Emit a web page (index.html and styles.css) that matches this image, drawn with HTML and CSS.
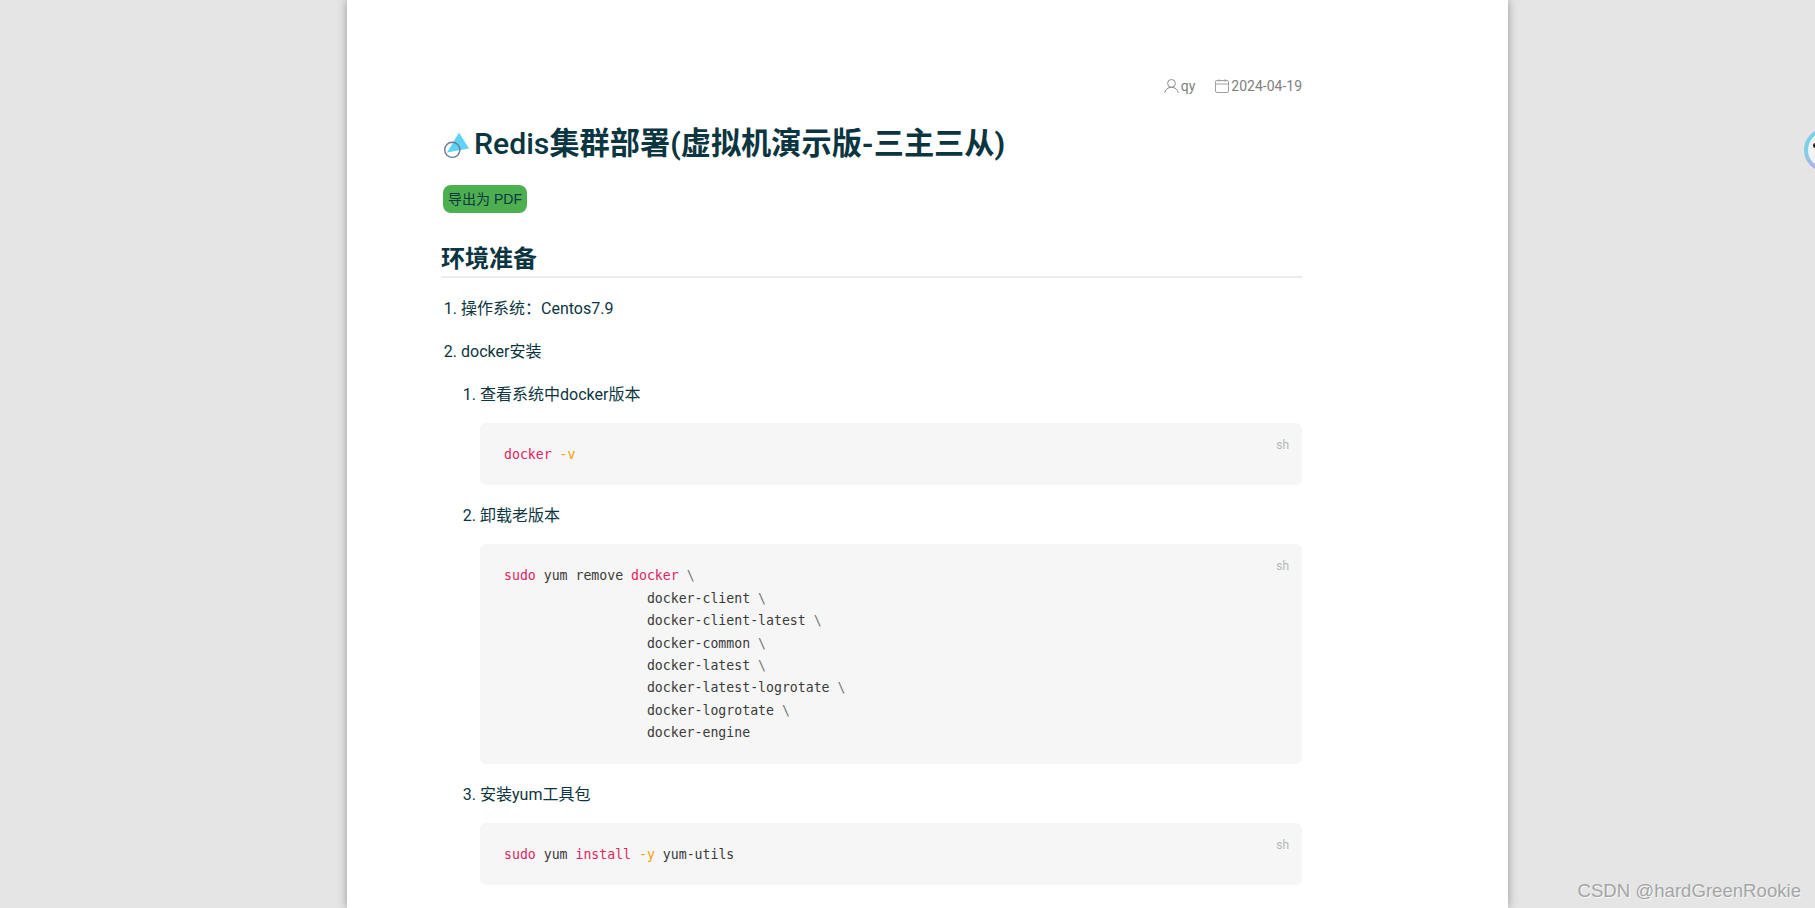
FILE: index.html
```html
<!DOCTYPE html>
<html lang="zh-CN">
<head>
<meta charset="utf-8">
<title>Redis集群部署</title>
<link rel="stylesheet" href="styles.css">
</head>
<body>
<main class="page">
  <div class="meta">
    <span class="meta-item">
      <svg class="ic ic-user" viewBox="0 0 15 14" fill="none" stroke="#8d8d8d" stroke-width="1"><circle cx="7.500" cy="4.400" r="3.900"/><path d="M.8 13.800c.4-3.400 3.200-5.500 6.700-5.500s6.300 2.100 6.700 5.500"/></svg>qy
    </span>
    <span class="meta-item">
      <svg class="ic" viewBox="0 0 14 14" fill="none" stroke="#a0a0a0" stroke-width="1"><rect x=".5" y="1.500" width="13" height="12" rx="1.500"/><path d="M.5 5h13M4 .2v2.600M10 .2v2.600"/></svg>2024-04-19
    </span>
  </div>
  <h1 class="title">
    <svg class="logo" viewBox="0 0 27 27"><path d="M17 1.500 27 17.500 5 21.500z" fill="#5fd3f5"/><circle cx="10.300" cy="18.800" r="7.600" fill="none" stroke="#6d7a94" stroke-width="1.400"/></svg><span class="latin">Redis</span>集群部署(虚拟机演示版-三主三从)
  </h1>
  <button class="pdf" type="button">导出为 PDF</button>
  <h2 class="section">环境准备</h2>
  <ol class="list">
    <li>操作系统：Centos7.9</li>
    <li>docker安装
      <ol class="list sub">
        <li>查看系统中docker版本
          <div class="code"><span class="lang">sh</span><pre><span class="r">docker</span> <span class="o">-v</span></pre></div>
        </li>
        <li>卸载老版本
          <div class="code"><span class="lang">sh</span><pre><span class="r">sudo</span> yum remove <span class="r">docker</span> <span class="m">\</span>
                  docker-client <span class="m">\</span>
                  docker-client-latest <span class="m">\</span>
                  docker-common <span class="m">\</span>
                  docker-latest <span class="m">\</span>
                  docker-latest-logrotate <span class="m">\</span>
                  docker-logrotate <span class="m">\</span>
                  docker-engine</pre></div>
        </li>
        <li>安装yum工具包
          <div class="code"><span class="lang">sh</span><pre><span class="r">sudo</span> yum <span class="r">install</span> <span class="o">-y</span> yum-utils</pre></div>
        </li>
      </ol>
    </li>
  </ol>
</main>
<div class="orb"><span class="orb-dot"></span></div>
<div class="mark">CSDN @hardGreenRookie</div>
</body>
</html>
```
FILE: styles.css
```css
html, body { margin: 0; height: 908px; overflow: hidden; }
body {
  background: #e5e5e5;
  color: #0b3540;
  font-family: Roboto, "Noto Sans CJK SC", sans-serif;
  font-size: 16px;
}
.page {
  box-sizing: border-box;
  width: 1161px;
  height: 908px;
  margin-left: 347px;
  padding: 76px 206px 0 94px;
  background: #fff;
  box-shadow: 0 0 9px rgba(0, 0, 0, .35);
}
.meta {
  display: flex;
  justify-content: flex-end;
  gap: 20px;
  height: 20px;
  font-size: 14px;
  line-height: 21px;
  color: #7f7f7f;
}
.meta-item { display: flex; align-items: center; gap: 2px; }
.ic { width: 14px; height: 14px; }
.ic-user { width: 15px; }
.title {
  display: flex;
  align-items: center;
  margin: 26px 0 0;
  height: 44px;
  font-size: 30.200px;
  line-height: 44px;
  font-weight: 700;
  white-space: nowrap;
}
.latin { font-weight: 500; }
.logo { width: 27px; height: 27px; margin: 0 5px 0 1px; overflow: visible; }
.pdf {
  display: block;
  margin: 19px 0 0 2px;
  box-sizing: border-box;
  width: 84px;
  height: 28px;
  padding: 1px 0 0;
  border: 0;
  border-radius: 8px;
  background: #4caf50;
  color: #0b3540;
  font: 14px/27px "Liberation Sans", "Noto Sans CJK SC", sans-serif;
}
.section {
  margin: 28px 0 0;
  height: 35px;
  border-bottom: 2px solid #ececec;
  font-size: 24px;
  line-height: 36px;
  font-weight: 700;
}
.list { margin: 19px 0 0; padding: 0 0 0 20px; }
.list > li { margin-top: 19px; line-height: 24px; }
.list > li:first-child { margin-top: 0; }
.sub { margin-top: 19px; padding-left: 19px; }
.code {
  position: relative;
  margin-top: 16px;
  padding: 21px 24px 19px;
  border-radius: 6px;
  background: #f6f6f6;
}
.code pre {
  margin: 0;
  color: #3a3a3a;
  font: 13.200px/22.400px "DejaVu Sans Mono", monospace;
}
.lang {
  position: absolute;
  top: 13px;
  right: 13px;
  color: #b8b8b8;
  font-size: 12px;
  line-height: 18px;
}
.r { color: #e0245e; }
.o { color: #f5a000; }
.m { color: #777; }
.orb {
  position: absolute;
  top: 128px;
  left: 1804px;
  box-sizing: border-box;
  width: 44px;
  height: 44px;
  border: 4px solid transparent;
  border-radius: 50%;
  background: linear-gradient(#f2f2f2, #f2f2f2) padding-box, linear-gradient(#7fd0e6, #7fd0e6 55%, #c0a8ec) border-box;
}
.orb-dot {
  position: absolute;
  top: 11px;
  left: 5px;
  width: 5px;
  height: 5px;
  border-radius: 50%;
  background: #222;
}
.mark {
  position: absolute;
  right: 14px;
  bottom: 4px;
  color: #a5a5a5;
  font: 18.600px/26px "Liberation Sans", sans-serif;
  text-shadow: 1px 1px 1px rgba(255, 255, 255, .8);
}
```
